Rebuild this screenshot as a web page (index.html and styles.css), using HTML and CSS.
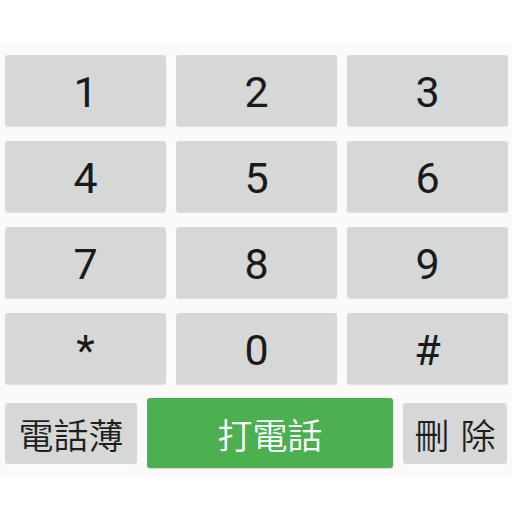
FILE: index.html
```html
<!DOCTYPE html>
<html>
<head>
<meta charset="utf-8">
<link rel="stylesheet" href="styles.css">
</head>
<body>
<div class="panel">
  <div class="grid">
    <div class="key">1</div>
    <div class="key">2</div>
    <div class="key">3</div>
    <div class="key">4</div>
    <div class="key">5</div>
    <div class="key">6</div>
    <div class="key">7</div>
    <div class="key">8</div>
    <div class="key">9</div>
    <div class="key">*</div>
    <div class="key">0</div>
    <div class="key">#</div>
  </div>
  <div class="actions">
    <div class="btn gray book">電話薄</div>
    <div class="btn call">打電話</div>
    <div class="btn gray del">刪&nbsp;除</div>
  </div>
</div>
</body>
</html>
```
FILE: styles.css
```css
html, body {
  margin: 0;
  padding: 0;
  background: #ffffff;
  width: 512px;
  height: 512px;
  overflow: hidden;
}
.panel {
  margin-top: 42px;
  background: #fafafa;
  padding: 13px 5px 10px 5px;
  display: flex;
  flex-direction: column;
  gap: 14px;
}
.grid {
  display: grid;
  grid-template-columns: 161px 161px 161px;
  column-gap: 10px;
  row-gap: 15px;
}
.key {
  height: 71px;
  background: #d6d7d7;
  border-radius: 3px;
  box-shadow: 0 1px 1px rgba(0,0,0,0.12);
  display: flex;
  align-items: center;
  justify-content: center;
  font-family: Roboto, "Noto Sans", sans-serif;
  font-size: 43px;
  font-weight: 400;
  color: #1a1a1a;
  padding-top: 2px;
  box-sizing: border-box;
}
.actions {
  display: flex;
  align-items: center;
  gap: 10px;
  height: 70px;
}
.btn {
  display: flex;
  align-items: center;
  justify-content: center;
  border-radius: 3px;
  box-shadow: 0 1px 1px rgba(0,0,0,0.14);
  font-family: "Noto Sans CJK TC", "Noto Sans CJK SC", sans-serif;
  font-size: 35px;
  font-weight: 350;
}
.gray {
  background: #d6d7d7;
  color: #1e1e1e;
  height: 60px;
}
.book { width: 132px; }
.call {
  width: 246px;
  height: 70px;
  background: #4caf50;
  color: #ffffff;
}
.del { width: 104px; word-spacing: 3px; }
```
